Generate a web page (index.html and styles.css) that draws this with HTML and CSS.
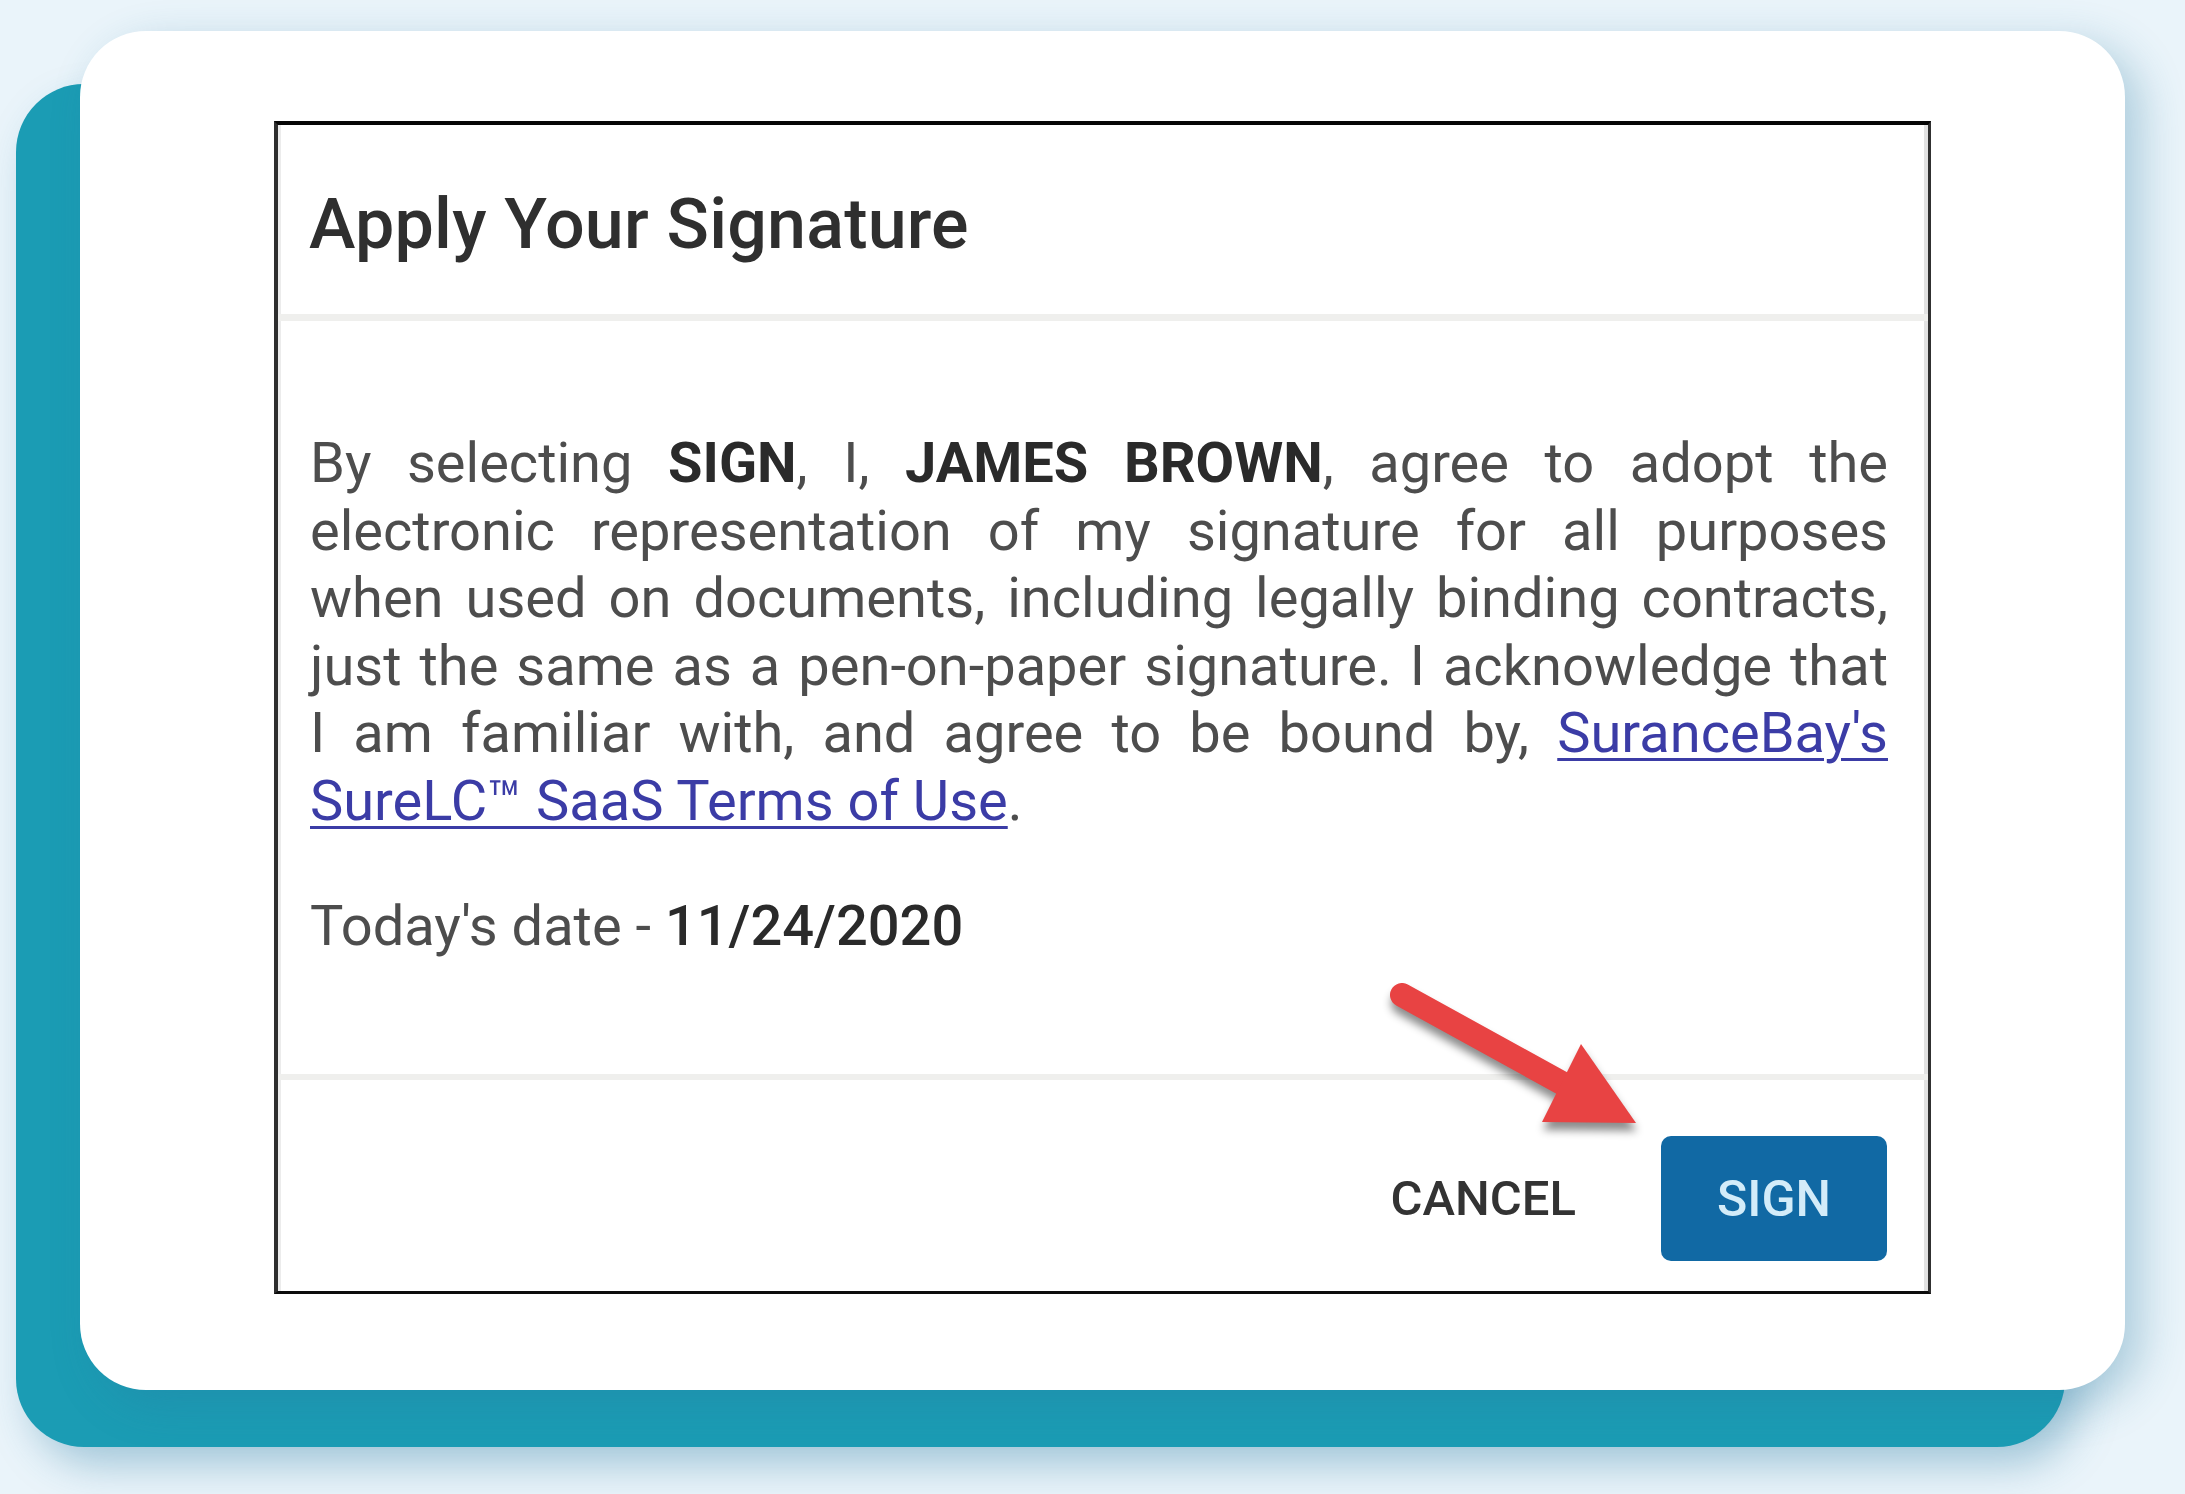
FILE: index.html
```html
<!DOCTYPE html>
<html lang="en">
<head>
<meta charset="utf-8">
<title>Apply Your Signature</title>
<link rel="stylesheet" href="styles.css">
</head>
<body>
<div class="page">
  <div class="card">
    <section class="dialog">
      <header class="dialog-head">
        <h1 class="title">Apply Your Signature</h1>
      </header>
      <div class="dialog-body">
        <p class="consent">
          <span class="ln">By selecting <b>SIGN</b>, I, <b>JAMES BROWN</b>, agree to adopt the</span>
          <span class="ln">electronic representation of my signature for all purposes</span>
          <span class="ln">when used on documents, including legally binding contracts,</span>
          <span class="ln">just the same as a pen-on-paper signature. I acknowledge that</span>
          <span class="ln">I am familiar with, and agree to be bound by, <a href="#" class="terms">SuranceBay's</a></span>
          <span class="ln ln-last"><a href="#" class="terms">SureLC™ SaaS Terms of Use</a>.</span>
        </p>
        <p class="date">Today's date - <b>11/24/2020</b></p>
      </div>
      <footer class="dialog-foot">
        <button class="btn-text" type="button">CANCEL</button>
        <button class="btn-primary" type="button">SIGN</button>
      </footer>
      <svg class="arrow" width="280" height="170" viewBox="0 0 280 170" aria-hidden="true">
        <line x1="28" y1="21" x2="195" y2="113" stroke="#e84343" stroke-width="24" stroke-linecap="round"/>
        <polygon points="207,70 168,148 262,149" fill="#e84343"/>
      </svg>
    </section>
  </div>
</div>
</body>
</html>
```
FILE: styles.css
```css
html, body {
  margin: 0;
  padding: 0;
  height: 100%;
  overflow: hidden;
}

body {
  background: #eaf4fa;
  font-family: Roboto, "Liberation Sans", Arial, sans-serif;
}

.page {
  padding: 31px 0 0 80px;
}

.card {
  width: 2045px;
  box-sizing: border-box;
  padding: 90px 194px 96px;
  background: #ffffff;
  border-radius: 66px;
  box-shadow:
    16px 14px 44px rgba(40, 120, 160, 0.32),
    -62px 55px 0 2px #1b9cb4,
    -48px 74px 42px rgba(40, 120, 160, 0.38);
}

.dialog {
  position: relative;
  width: 1657px;
  box-sizing: border-box;
  background: #ffffff;
  border-top: 4px solid #060606;
  border-left: 4px solid #2e2e2e;
  border-right: 3px solid #303030;
  border-bottom: 3px solid #0c0c0c;
  box-shadow: inset 3px 0 0 #ececec, inset -4px 0 0 #e2e2e2;
}

.dialog-head {
  padding: 58px 40px 49px 31px;
  border-bottom: 7px solid #efefed;
}

.title {
  margin: 0;
  font-size: 70px;
  line-height: 82px;
  font-weight: 500;
  color: #2f2f2f;
  letter-spacing: 0.2px;
}

.dialog-body {
  padding: 109px 40px 114px 32px;
  color: #4d4d4d;
}

.consent {
  margin: 0;
  font-size: 56px;
  line-height: 67.5px;
}

.ln {
  display: block;
  white-space: nowrap;
  text-align: justify;
  text-align-last: justify;
}

.ln-last {
  text-align-last: left;
}

.consent b,
.date b {
  color: #2a2a2a;
  font-weight: 700;
}

.terms {
  color: #3b3ca6;
  text-decoration: underline;
  text-decoration-thickness: 3px;
  text-underline-offset: 6px;
}

.date {
  margin: 57.5px 0 0;
  font-size: 56px;
  line-height: 67.5px;
}

.date b {
  font-weight: 500;
}

.dialog-foot {
  display: flex;
  justify-content: flex-end;
  align-items: center;
  padding: 56px 41px 30px 32px;
  border-top: 6px solid #efefed;
}

.btn-text {
  margin: 0 85px 0 0;
  padding: 0;
  border: 0;
  background: none;
  font-family: Roboto, "Liberation Sans", Arial, sans-serif;
  font-size: 49px;
  font-weight: 500;
  color: #333333;
}

.btn-primary {
  width: 226px;
  height: 125px;
  margin: 0;
  padding: 0;
  border: 0;
  border-radius: 10px;
  background: #1169a4;
  color: #d3ecf9;
  font-family: Roboto, "Liberation Sans", Arial, sans-serif;
  font-size: 50px;
  font-weight: 500;
}

.arrow {
  position: absolute;
  left: 1096px;
  top: 849px;
  overflow: visible;
  filter: drop-shadow(1px 8px 4px rgba(0, 0, 0, 0.45));
}
```
